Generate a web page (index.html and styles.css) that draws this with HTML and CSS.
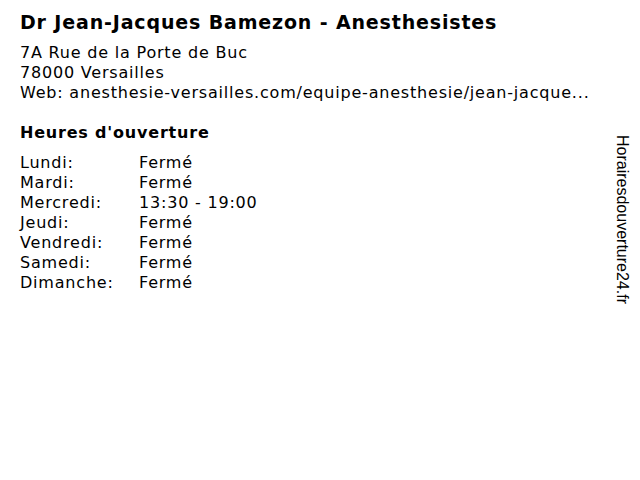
FILE: index.html
```
<!DOCTYPE html>
<html lang="fr">
<head>
<meta charset="utf-8">
<link rel="stylesheet" href="styles.css">
</head>
<body>
<div class="page">
  <h1 class="title">Dr Jean-Jacques Bamezon - Anesthesistes</h1>
  <div class="address">
    <div>7A Rue de la Porte de Buc</div>
    <div>78000 Versailles</div>
    <div>Web: anesthesie-versailles.com/equipe-anesthesie/jean-jacque...</div>
  </div>
  <h2 class="hours-title">Heures d'ouverture</h2>
  <div class="hours">
    <span class="day">Lundi:</span><span class="val">Fermé</span>
    <span class="day">Mardi:</span><span class="val">Fermé</span>
    <span class="day">Mercredi:</span><span class="val">13:30 - 19:00</span>
    <span class="day">Jeudi:</span><span class="val">Fermé</span>
    <span class="day">Vendredi:</span><span class="val">Fermé</span>
    <span class="day">Samedi:</span><span class="val">Fermé</span>
    <span class="day">Dimanche:</span><span class="val">Fermé</span>
  </div>
</div>
<div class="side">Horairesdouverture24.fr</div>
</body>
</html>
```
FILE: styles.css
```
html, body {
  margin: 0;
  padding: 0;
  background: #fff;
}
body {
  width: 640px;
  height: 480px;
  position: relative;
  overflow: hidden;
  font-family: "DejaVu Sans", Verdana, sans-serif;
  color: #000;
}
.page {
  padding: 10px 0 0 20px;
}
.title {
  margin: 0;
  font-size: 19px;
  line-height: 24px;
  font-weight: bold;
  letter-spacing: 0.85px;
}
.address {
  margin-top: 9px;
  font-size: 16px;
  line-height: 20px;
  letter-spacing: 0.8px;
}
.hours-title {
  margin: 20px 0 0;
  font-size: 16px;
  line-height: 20px;
  font-weight: bold;
  letter-spacing: 0.8px;
}
.hours {
  margin-top: 10px;
  display: grid;
  grid-template-columns: 119px auto;
  font-size: 16px;
  line-height: 20px;
  letter-spacing: 0.8px;
}
.side {
  position: absolute;
  left: 613px;
  top: 135px;
  writing-mode: vertical-rl;
  font-family: "Liberation Sans", Arial, sans-serif;
  font-size: 16px;
  line-height: 18px;
  color: #000;
}
```
